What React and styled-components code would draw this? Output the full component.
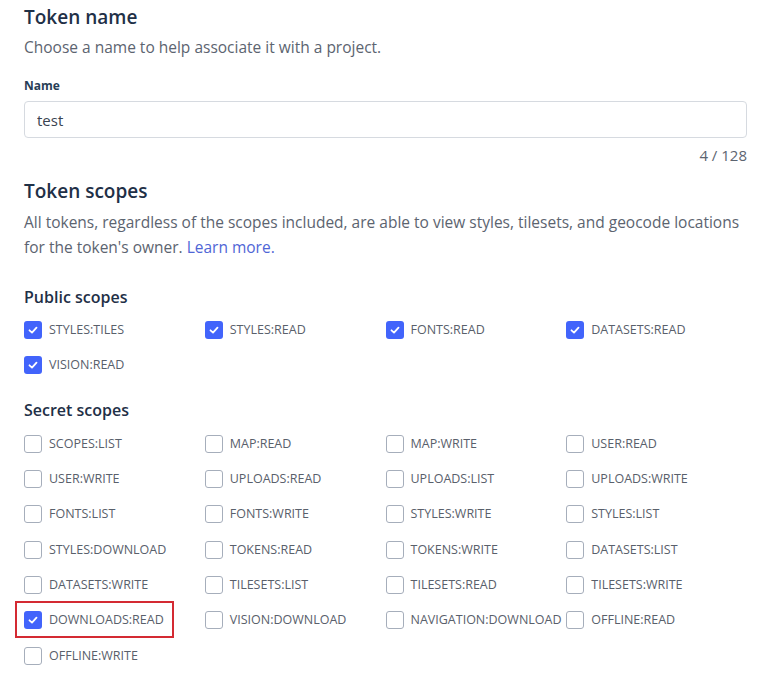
import React from 'react';
import styled, { createGlobalStyle } from 'styled-components';

const GlobalStyle = createGlobalStyle`
  body {
    margin: 0;
    background: #ffffff;
    font-family: 'Open Sans', 'Noto Sans', sans-serif;
  }
`;

const Page = styled.div`
  padding: 3px 21px 20px 24px;
  color: #5c6470;
`;

const Heading = styled.h2`
  margin: ${({ $top }) => $top || '0'} 0 0 0;
  font-size: 19px;
  line-height: 28px;
  font-weight: 600;
  color: #1f3047;
`;

const Lead = styled.p`
  margin: ${({ $top }) => $top || '4px'} 0 0 0;
  font-size: 15.5px;
  line-height: ${({ $lh }) => $lh || '24px'};
  color: #5c6470;
`;

const Link = styled.a`
  color: #4f66d6;
  text-decoration: none;
`;

const FieldLabel = styled.label`
  display: block;
  margin-top: 18px;
  font-size: 12px;
  line-height: 18px;
  font-weight: 700;
  color: #273d56;
`;

const Input = styled.input`
  display: block;
  box-sizing: border-box;
  width: 100%;
  height: 37px;
  margin-top: 6px;
  padding: 0 12px;
  border: 1px solid #d6dae0;
  border-radius: 4px;
  font-family: inherit;
  font-size: 15px;
  color: #3a4350;
  outline: none;
`;

const Counter = styled.div`
  margin-top: 7px;
  text-align: right;
  font-size: 15px;
  line-height: 20px;
  color: #5c6470;
`;

const SectionTitle = styled.h3`
  margin: ${({ $top }) => $top} 0 0 0;
  font-size: 16px;
  line-height: 24px;
  font-weight: 600;
  color: #1f3047;
`;

const ScopeGrid = styled.div`
  display: grid;
  grid-template-columns: repeat(4, 1fr);
  grid-auto-rows: 35.33px;
  margin-top: 4px;
`;

const Scope = styled.label`
  position: relative;
  display: flex;
  align-items: center;
  gap: 7px;
  align-self: center;
  justify-self: start;
  font-size: 12.5px;
  line-height: 18px;
  color: #59606b;
  white-space: nowrap;

  ${({ $highlight }) =>
    $highlight &&
    `
    &::after {
      content: '';
      position: absolute;
      top: -10px;
      bottom: -9px;
      left: -9px;
      right: -10px;
      border: 2px solid #d42a33;
    }
  `}
`;

const Box = styled.span`
  box-sizing: border-box;
  flex: none;
  display: flex;
  align-items: center;
  justify-content: center;
  width: 18px;
  height: 18px;
  border-radius: 3px;
  border: ${({ $checked }) => ($checked ? 'none' : '1.5px solid #a6aebb')};
  background: ${({ $checked }) => ($checked ? '#4264fb' : '#ffffff')};
`;

const Check = () => (
  <svg width="12" height="12" viewBox="0 0 12 12">
    <polyline
      points="2.5,6.3 5,8.6 9.5,3.6"
      fill="none"
      stroke="#ffffff"
      strokeWidth="1.8"
      strokeLinecap="round"
      strokeLinejoin="round"
    />
  </svg>
);

const publicScopes = ['STYLES:TILES', 'STYLES:READ', 'FONTS:READ', 'DATASETS:READ', 'VISION:READ'];

const secretScopes = [
  'SCOPES:LIST', 'MAP:READ', 'MAP:WRITE', 'USER:READ',
  'USER:WRITE', 'UPLOADS:READ', 'UPLOADS:LIST', 'UPLOADS:WRITE',
  'FONTS:LIST', 'FONTS:WRITE', 'STYLES:WRITE', 'STYLES:LIST',
  'STYLES:DOWNLOAD', 'TOKENS:READ', 'TOKENS:WRITE', 'DATASETS:LIST',
  'DATASETS:WRITE', 'TILESETS:LIST', 'TILESETS:READ', 'TILESETS:WRITE',
  'DOWNLOADS:READ', 'VISION:DOWNLOAD', 'NAVIGATION:DOWNLOAD', 'OFFLINE:READ',
  'OFFLINE:WRITE',
];

const ScopeItem = ({ name, checked, highlight }) => (
  <Scope $highlight={highlight}>
    <Box $checked={checked}>{checked && <Check />}</Box>
    {name}
  </Scope>
);

const App = () => {
  return (
    <>
      <GlobalStyle />
      <Page>
        <Heading>Token name</Heading>
        <Lead>Choose a name to help associate it with a project.</Lead>
        <FieldLabel>Name</FieldLabel>
        <Input defaultValue="test" />
        <Counter>4 / 128</Counter>

        <Heading $top="12px">Token scopes</Heading>
        <Lead $top="4.5px" $lh="25px">
          All tokens, regardless of the scopes included, are able to view styles, tilesets, and geocode locations
          for the token's owner. <Link href="#">Learn more.</Link>
        </Lead>

        <SectionTitle $top="25px">Public scopes</SectionTitle>
        <ScopeGrid>
          {publicScopes.map((s) => (
            <ScopeItem key={s} name={s} checked />
          ))}
        </ScopeGrid>

        <SectionTitle $top="15px">Secret scopes</SectionTitle>
        <ScopeGrid>
          {secretScopes.map((s) => (
            <ScopeItem
              key={s}
              name={s}
              checked={s === 'DOWNLOADS:READ'}
              highlight={s === 'DOWNLOADS:READ'}
            />
          ))}
        </ScopeGrid>
      </Page>
    </>
  );
};

export default App;
